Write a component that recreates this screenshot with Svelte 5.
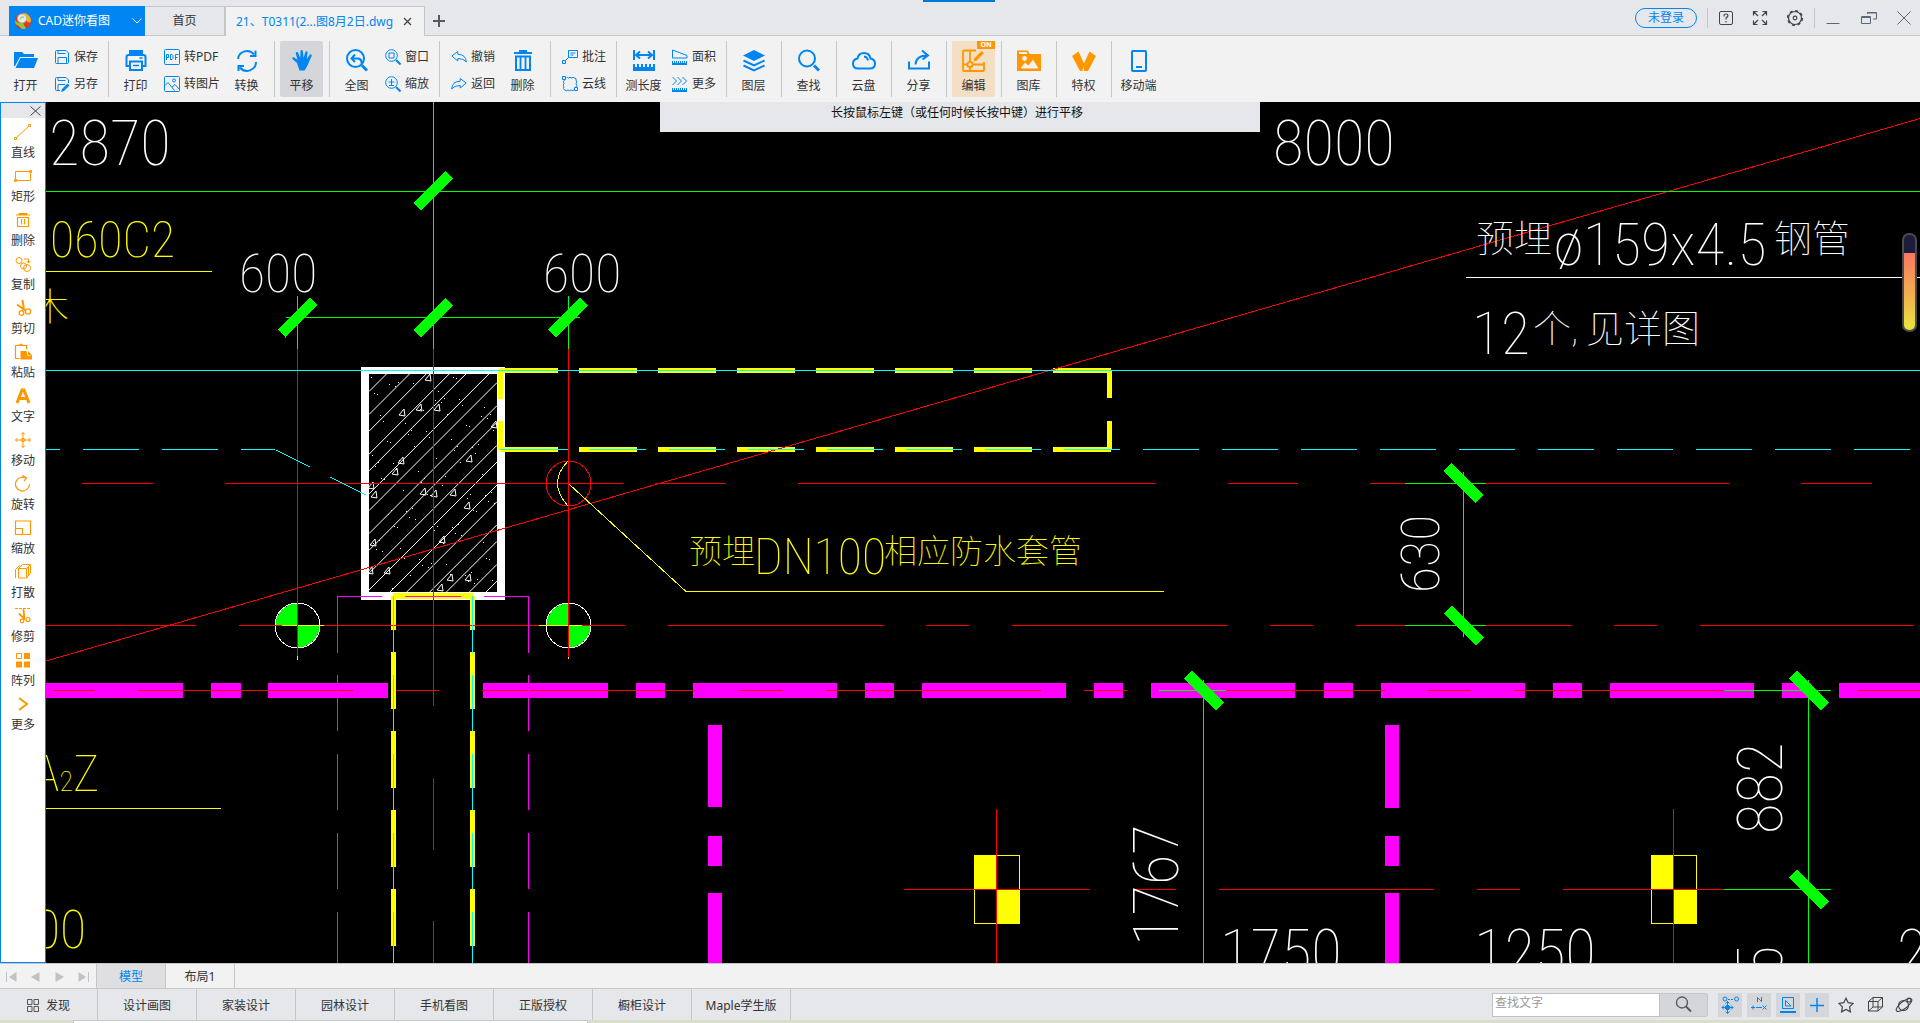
<script>
  const blue = '#0085f2';

  const icons = {
    open: '<path fill="currentColor" d="M0 3h8l2 2h10v3H6L1 17H0z"/><path fill="currentColor" d="M6.500 9H24l-4 10H1.500z"/>',
    print: '<path fill="currentColor" d="M5 1h14v4H5z"/><path fill="none" stroke="currentColor" stroke-width="2" d="M6 17H2.500V8q0-2 2-2h15q2 0 2 2v9H18M6 12.500h12V21H6z"/><path stroke="currentColor" stroke-width="1.500" d="M15.500 9h3M9 16.500h6"/>',
    convert: '<path fill="none" stroke="currentColor" stroke-width="2" d="M3 10A9 9 0 0 1 19 5.500M21 13A9 9 0 0 1 5 18.500M20.500 1.500v5.500H15M3.500 22v-5H9"/>',
    hand: '<path fill="currentColor" d="M7 14 3 10.500q-1.600-1.700.2-2.500l4.300 2.700L5.700 4q.6-1.700 2.200-.8L10.300 9 10.600 1.700q1-1.500 2.200 0L13.500 9l2-6.300q1.500-1 2.100.5L16.700 10l3.300-4.500q1.700-.6 1.700 1.200L17.700 16l-3 5.500H9.500z"/>',
    extents: '<g fill="none" stroke="currentColor" stroke-width="2"><circle cx="10.500" cy="9.500" r="8.500"/><path stroke-width="3" d="m17 16.500 5 5"/><path d="M10 5.500 6.500 9.500l3.500 3.500M7 9.500h6q4 .5 3.500 5"/></g>',
    trash: '<path fill="currentColor" d="M8 1h8v2h5v2H3V3h5z"/><path fill="none" stroke="currentColor" stroke-width="2" d="M5 7.500h14V21H5z"/><path stroke="currentColor" stroke-width="1.800" d="M9.500 8v12M14.500 8v12"/>',
    length: '<path fill="none" stroke="currentColor" stroke-width="2" d="M2 1v10M22 1v10M4 6h16M8 2.500 4 6l4 3.500M16 2.500 20 6l-4 3.500"/><path fill="currentColor" d="M1 15h2v3h2v-3h2v3h2v-3h2v3h2v-3h2v3h2v-3h2v3h2v-3h2v7H1z"/>',
    layers: '<path fill="currentColor" d="M12 1 23 6.500 12 12 1 6.500z"/><path fill="none" stroke="currentColor" stroke-width="2" d="m1.500 11.500 10.500 5 10.500-5M1.500 16.500l10.500 5 10.500-5"/>',
    find: '<circle cx="10" cy="9.500" r="8" fill="none" stroke="currentColor" stroke-width="2"/><path stroke="currentColor" stroke-width="3" d="m17 16.500 5 5"/>',
    cloud: '<path fill="none" stroke="currentColor" stroke-width="2" d="M6 19.500q-5 0-5-5 0-4 4.500-5Q6.500 4 12 4q5.500 0 6.500 5.500 4.500 1 4.500 5 0 5-5 5z"/><path fill="none" stroke="currentColor" stroke-width="1.800" d="M12 7.500q3.500.5 4 4"/>',
    share: '<path fill="none" stroke="currentColor" stroke-width="2" d="M2 12.500v7h20v-7M8.500 15.500q.5-9 12-9M15 1.500l6 5-5.500 4"/>',
    edit: '<g fill="none" stroke="currentColor" stroke-width="1.800"><path d="M14 1.500H2q-1 0-1 1V21q0 1 1 1h19q1 0 1-1v-8M1 15.500h4M10.500 15.500H22M8 1.500V13M8 18.500V22"/><circle cx="8" cy="15.500" r="2.600"/></g><path fill="currentColor" d="m19.500 2 2.300 2.300-7.300 7.500-3 .7.700-3z"/>',
    library: '<path fill="currentColor" d="M0 1.500h11l1.500 3.500H24v17H0z"/><path fill="#f2f2f2" d="M2 3h7.500l1 2H2zM3.500 19.500l4.500-6 3.500 3 4.500-6 5.500 9z"/><circle cx="7.500" cy="9.500" r="2.400" fill="#f2f2f2"/>',
    right: '<path fill="currentColor" d="m0 7 6.500-4.500L12 14.500 17.500 2.500 24 7l-8 15h-4l-.6-4.500-1 4.500H8z"/>',
    mobile: '<rect x="5" y="2" width="14" height="20" rx="1" fill="none" stroke="currentColor" stroke-width="2"/><path stroke="currentColor" stroke-width="2" d="M9 18h6"/>',
    save: '<path fill="none" stroke="currentColor" d="M1.500 2.500q0-1 1-1H12l2.500 2.500v9.500q0 1-1 1h-11q-1 0-1-1zM4 1.500v3h7.500M4 14.500v-6h8.500v6"/>',
    saveAs: '<path fill="none" stroke="currentColor" d="M6 14.500H2.500q-1 0-1-1v-11q0-1 1-1H12l2.500 2.500v3M4 1.500v3h7.500M4 14.500v-6h7"/><path fill="currentColor" d="m13.500 7.500 2 2-5.500 5.500-3 1 1-3z"/>',
    pdf: '<rect x=".5" y=".5" width="15" height="15" rx="1" fill="none" stroke="currentColor"/><path fill="none" stroke="currentColor" d="M2.500 11V5.500h2v3h-2M6.500 11V5.500h1.500l1 1v3l-1 1H6.500M11.500 11V5.500h3M11.500 8.500h2"/>',
    picture: '<rect x=".5" y=".5" width="15" height="15" rx="1" fill="none" stroke="currentColor"/><circle cx="10" cy="4.500" r="1.500" fill="none" stroke="currentColor"/><path fill="none" stroke="currentColor" d="m1 9.500 3-3 6.500 8M8 11l3-2.500 4 4.500"/>',
    window: '<circle cx="6.500" cy="6.500" r="5.800" fill="none" stroke="currentColor"/><path fill="none" stroke="currentColor" d="M4 4h5v5H4z"/><path stroke="currentColor" stroke-width="2" d="m11 11 4.500 4.500"/>',
    zoom: '<circle cx="6.500" cy="6.500" r="5.800" fill="none" stroke="currentColor"/><path fill="none" stroke="currentColor" d="M3.500 6h6M6.500 3v6M4 9.500h5"/><path stroke="currentColor" stroke-width="2" d="m11 11 4.500 4.500"/>',
    undo: '<path fill="none" stroke="currentColor" d="m.8 7 6-4.500v2.800q8 0 8.500 7.700-2.500-3.500-8.500-3.500V12z"/>',
    redo: '<path fill="none" stroke="currentColor" d="m15.200 7-6-4.500v2.800q-8 0-8.500 7.700 2.500-3.500 8.500-3.500V12z"/>',
    note: '<path fill="none" stroke="currentColor" d="M6.500 1.500h9v7h-9zM8.500 4h5M8.500 6h3M6.500 8.500l-3 3M.5 11.500h3v3h-3z"/>',
    cloudLine: '<path fill="none" stroke="currentColor" d="M2.500 4Q.5 5.500 2 7.500.5 9.500 2 11q-1.500 1.500.5 3 2 1.500 3.500 0 1.500 1.500 3 0 1.500 1 3 0M14 11q1.500-1.500 0-3.500 1.500-1.500 0-3.500.5-2-1.500-2-1.500-1.500-3 0-1.500-1.500-3 0-1-1-2 0M.5.500h3v3h-3zM12.500 11.500h3v3h-3z"/>',
    area: '<path fill="none" stroke="currentColor" d="M.5 1v8h14.500V6.500z"/><path fill="currentColor" d="M0 12h1v2h1v-2h1v2h1v-2h1v2h1v-2h1v2h1v-2h1v2h1v-2h1v2h1v-2h1v2h1v-2h1v4H0z"/>',
    moreMeasure: '<path fill="none" stroke="currentColor" d="m.5 1 4 4-4 4M5.500 1l4 4-4 4M10.500 1l4 4-4 4"/><path fill="currentColor" d="M0 12h1v2h1v-2h1v2h1v-2h1v2h1v-2h1v2h1v-2h1v2h1v-2h1v2h1v-2h1v2h1v-2h1v4H0z"/>',
    line: '<path fill="none" stroke="currentColor" d="M2 15 15 3M.5 14.500h2v2h-2zM14.500 1.500h2v2h-2z"/>',
    rect: '<path fill="none" stroke="currentColor" d="M1.500 4.500h15v9h-15zM.5 12.500h2v2h-2zM15.500 3.500h2v2h-2z"/>',
    bin: '<path fill="none" stroke="currentColor" stroke-width="1.200" d="M3.500 6.500h11v9h-11zM7.500 8v5.500M10.500 8v5.500M2 4h14"/><path fill="currentColor" d="M4.500 2h9v2h-9z"/>',
    copy: '<g fill="none" stroke="currentColor"><circle cx="5" cy="5.500" r="3"/><circle cx="9.500" cy="11" r="3"/><circle cx="13" cy="13" r="3.500"/><path d="M10 4h4.500v4M12.500 6l2 2 2-2"/></g>',
    cut: '<path stroke="currentColor" stroke-width="2" fill="none" d="m3 5.500 8 6M8.500 1l1.500 10"/><g fill="none" stroke="currentColor" stroke-width="1.300"><circle cx="7.500" cy="14" r="2.300"/><circle cx="14" cy="12.500" r="2.600"/></g>',
    paste: '<path fill="none" stroke="currentColor" stroke-width="1.200" d="M5.500 15.500h-4v-13h11v4"/><path fill="currentColor" d="M4.500 3V1.500H6Q7-.5 8 1.500h1.500V3zM6.500 8h6l1 5 5-1v4.500H6.500zM14 8l4 4h-4z"/>',
    text: '<path fill="none" stroke="currentColor" stroke-width="3" d="m3 16 5-13h2l5 13M5 11.500h8"/>',
    move: '<g fill="none" stroke="currentColor"><path d="M9 1.500v15M1.500 9h15M7 3.500l2-2 2 2M7 14.500l2 2 2-2M3.500 7l-2 2 2 2M14.500 7l2 2-2 2"/><circle cx="9" cy="9" r="1.800"/></g>',
    rotate: '<path fill="none" stroke="currentColor" stroke-width="1.200" d="M12 3A7 7 0 1 0 15.500 9M8.500.5 12.500 3 10 6"/>',
    scale: '<path fill="none" stroke="currentColor" stroke-width="1.200" d="M1.500 9V2h15v13.500H9M1.500 9.500h7v6h-7z"/>',
    explode: '<path fill="none" stroke="currentColor" d="M4.500 5.500h8v9.500h-8zM4.500 5.500l4-4h8l-4 4M16.500 1.500v8.500l-4 5M1.500 15V6.500L6 2M14.500 4v8.500"/>',
    trim: '<path stroke="currentColor" stroke-dasharray="3 1" d="M1 1.500h16"/><path stroke="currentColor" stroke-width="1.800" fill="none" d="m5 6.500 6 6M9.500 2l.8 9"/><g fill="none" stroke="currentColor" stroke-width="1.200"><circle cx="8" cy="14" r="1.800"/><circle cx="14" cy="12.500" r="2"/></g>',
    array: '<path fill="none" stroke="currentColor" d="M2.500 2.500h5v5h-5z"/><path fill="currentColor" d="M10 2h6v6h-6zM2 10.500h6v6H2zM10 10.500h6v6h-6z"/>',
    chevron: '<path fill="none" stroke="currentColor" stroke-width="2" d="m5 3 8 6-8 6"/>',
  };

  const groups = [
    [{ big: 'open', label: '打开' }, { stack: [['save', '保存'], ['saveAs', '另存']] }],
    [{ big: 'print', label: '打印' }, { stack: [['pdf', '转PDF'], ['picture', '转图片']], wide: true }, { big: 'convert', label: '转换' }],
    [{ big: 'hand', label: '平移', active: true }],
    [{ big: 'extents', label: '全图' }, { stack: [['window', '窗口'], ['zoom', '缩放']] }],
    [{ stack: [['undo', '撤销'], ['redo', '返回']], lead: true, tight: true }, { big: 'trash', label: '删除' }],
    [{ stack: [['note', '批注'], ['cloudLine', '云线']], lead: true }],
    [{ big: 'length', label: '测长度' }, { stack: [['area', '面积'], ['moreMeasure', '更多']] }],
    [{ big: 'layers', label: '图层' }],
    [{ big: 'find', label: '查找' }],
    [{ big: 'cloud', label: '云盘' }],
    [{ big: 'share', label: '分享' }],
    [{ big: 'edit', label: '编辑', warm: true, on: true }],
    [{ big: 'library', label: '图库', warm: true }],
    [{ big: 'right', label: '特权', warm: true }],
    [{ big: 'mobile', label: '移动端' }],
  ];

  const tools = [
    ['line', '直线'], ['rect', '矩形'], ['bin', '删除'], ['copy', '复制'], ['cut', '剪切'],
    ['paste', '粘贴'], ['text', '文字'], ['move', '移动'], ['rotate', '旋转'], ['scale', '缩放'],
    ['explode', '打散'], ['trim', '修剪'], ['array', '阵列'], ['chevron', '更多'],
  ];

  const links = ['设计画图', '家装设计', '园林设计', '手机看图', '正版授权', '橱柜设计', 'Maple学生版'];

  let query = $state('');

  // Drawing data, in drawing coordinates
  const hseg = (y, list) => list.map(([a, b]) => `M${a} ${y}H${b}`).join('');
  const vseg = (x, list) => list.map(([a, b]) => `M${x} ${a}V${b}`).join('');
  const dashes = (from, to, on, step) => {
    const out = [];
    for (let p = from; p < to; p += step) out.push([p, Math.min(p + on, to)]);
    return out;
  };

  const redAxes =
    hseg(483.5, [[82, 153], [225, 623], [655, 726], [798, 1156], [1228, 1298], [1370, 1405], [1486, 1729], [1801, 1872]]) +
    hseg(625.5, [[46, 196], [239, 625], [668, 883], [926, 969], [1012, 1227], [1270, 1313], [1356, 1405], [1486, 1571], [1614, 1657], [1700, 1914]]) +
    hseg(690.5, [[53, 95], [138, 353], [396, 439], [482, 696], [739, 783], [826, 1041], [1084, 1127], [1226, 1385], [1428, 1471], [1514, 1724], [1857, 1920]]) +
    hseg(889.5, [[904, 1090], [1133, 1176], [1219, 1434], [1477, 1520], [1563, 1724]]) +
    vseg(433.5, [[349, 706], [778, 850], [921, 963]]) +
    vseg(297.5, [[349, 656]]) + vseg(568.5, [[349, 657]]) +
    vseg(996.5, [[809, 963]]) + vseg(1673.5, [[809, 963]]);

  const greenDims =
    hseg(191.5, [[46, 1920]]) + hseg(317.5, [[286, 580]]) +
    vseg(433.5, [[102, 349]]) + vseg(297.5, [[296, 349]]) + vseg(568.5, [[296, 349]]) +
    hseg(483.5, [[1405, 1486]]) + hseg(625.5, [[1405, 1486]]) + vseg(1463.5, [[472, 637]]) +
    hseg(690.5, [[1159, 1226], [1724, 1831]]) + hseg(889.5, [[1724, 1831]]) +
    vseg(1203.5, [[680, 963]]) + vseg(1808.5, [[680, 963]]);

  const rising = [[297.5, 317.5], [433, 318], [568, 317.5], [433, 191]];
  const falling = [[1463.5, 483], [1463.5, 625.5], [1203.5, 690.5], [1808.5, 690.5], [1808.5, 889.5]];

  const beamH = hseg(690.5, [[46, 183], [211, 241], [268, 388], [483, 608], ...dashes(636, 1920, 29, 229.2), ...dashes(693, 1920, 144, 229.2)]);
  const beamV = vseg(715, [[725, 807], [836, 866], [893, 963]]) + vseg(1391.5, [[725, 808], [836, 866], [893, 963]]);

  const columnDashes = [[596, 653], [675, 731], [754, 810], [833, 889], [912, 963]];
  const footing = vseg(337.5, columnDashes) + vseg(528.5, columnDashes) + hseg(596.5, [[337, 382], [405, 461], [484, 529]]);
  const columnCore = vseg(393.5, columnDashes) + vseg(472.5, columnDashes);
  const yellowRuns = [[596, 630], [652, 709], [731, 788], [810, 867], [889, 946]];
  const yellowColumn = vseg(393.5, yellowRuns) + vseg(472.5, yellowRuns);
  const yellowBeam =
    hseg(370.5, dashes(500, 1111, 58, 79)) + hseg(449.5, dashes(500, 1111, 58, 79)) +
    vseg(500.5, [[370, 399], [421, 450]]) + vseg(1109.5, [[370, 398], [421, 450]]);
  const cyan =
    hseg(370.5, [[46, 1920]]) +
    hseg(449.5, [[46, 60], [83, 139], [162, 218], [241, 275], [500, 568], ...dashes(590, 1920, 56, 79)]) +
    'M276 450L310 467M330 477L366 495';

  const hatch = [];
  for (let i = 0; i < 9; i++) {
    hatch.push(760.5 + i * 39.7, 783.5 + i * 39.7);
  }
  const stones = [[428, 377], [402, 412], [419, 407], [437, 407], [494, 424], [469, 458], [401, 460], [395, 471], [371, 485], [374, 494], [423, 491], [434, 493], [453, 492], [467, 505], [373, 542], [442, 539], [370, 570], [387, 570], [450, 577], [468, 577], [440, 587]];
  const grains = [];
  for (let i = 0; i < 110; i++) {
    grains.push([371 + ((i * 47) % 125), 377 + ((i * 89 + ((i * i) % 7) * 5) % 213)]);
  }
  const bench = [[297.5, 625.5], [568.5, 625.5]];
  const blocks = [974, 1651];
</script>

<svelte:head><title>CAD迷你看图</title></svelte:head>

{#snippet icon(name, size, box)}
  <svg width={size} height={size} viewBox="0 0 {box} {box}" aria-hidden="true">{@html icons[name]}</svg>
{/snippet}

<div class="app">
  <header class="titlebar">
    <i class="notch"></i>
    <button class="brand">
      <svg width="18" height="18" viewBox="0 0 18 18" aria-hidden="true">
        <circle cx="9" cy="9" r="8" fill="#e2342b" />
        <path d="M9 1a8 8 0 0 1 8 8q-1 3-3 1L9 6z" fill="#f6b21b" />
        <path d="M1.200 8Q4 12 9 11l3 5.500Q4 19 1.200 11z" fill="#8cc63f" />
        <path d="M1.500 12Q5 14 8 17 3 17 1.500 12z" fill="#d92a22" />
        <path d="M11 10l5 4.500" stroke="#d8441e" stroke-width="2.500" />
        <circle cx="8" cy="6.500" r="4.500" fill="#e8f0e0" stroke="#b9b39a" />
        <path d="M6 7.500Q8 3 10 6" stroke="#a9c98a" fill="none" stroke-width="1.500" />
      </svg>
      <span>CAD迷你看图</span>
      <svg class="drop" width="10" height="6" viewBox="0 0 10 6" aria-hidden="true"><path d="m.5.500 4.500 4.500L9.500.500" fill="none" stroke="#fff" /></svg>
    </button>
    <nav class="tabs">
      <button class="tab">首页</button>
      <div class="tab current">
        <button class="doc">21、T0311(2...图8月2日.dwg</button>
        <button class="x" aria-label="关闭标签">
          <svg width="9" height="9" viewBox="0 0 9 9"><path d="M1 1l7 7M8 1L1 8" stroke="#444" stroke-width="1.300" /></svg>
        </button>
      </div>
      <button class="plus" aria-label="新建标签">
        <svg width="12" height="12" viewBox="0 0 12 12"><path d="M6 0v12M0 6h12" stroke="#555b66" stroke-width="2" /></svg>
      </button>
    </nav>
    <div class="controls">
      <button class="login">未登录</button>
      <span class="bar"></span>
      <button aria-label="帮助"><svg width="16" height="16" viewBox="0 0 16 16"><rect x="1.500" y="1.500" width="13" height="13" rx="1.500" fill="none" stroke="#444" /><path d="M6 6.500V5.500q0-1.500 2-1.500t2 1.500q0 1-2 2.500v1.500M8 11v1.500" fill="none" stroke="#444" stroke-width="1.200" /></svg></button>
      <button aria-label="全屏"><svg width="16" height="16" viewBox="0 0 16 16"><path d="M1.500 5.500v-4h4M2 2l4 4M10.500 1.500h4v4M14 2l-4 4M1.500 10.500v4h4M2 14l4-4M10.500 14.500h4v-4M14 14l-4-4" fill="none" stroke="#444" stroke-width="1.200" /></svg></button>
      <button aria-label="设置"><svg width="18" height="18" viewBox="0 0 18 18"><circle cx="9" cy="9" r="6.500" fill="none" stroke="#444" stroke-width="1.200" /><circle cx="9" cy="9" r="7.300" fill="none" stroke="#444" stroke-width="1.600" stroke-dasharray="3 2.730" /><circle cx="9" cy="9" r="1.800" fill="none" stroke="#444" stroke-width="1.200" /></svg></button>
      <span class="bar"></span>
      <button class="win" aria-label="最小化"><svg width="16" height="16" viewBox="0 0 16 16"><path d="M1.500 13.500h13" stroke="#5c6675" /></svg></button>
      <button class="win" aria-label="还原"><svg width="16" height="16" viewBox="0 0 16 16"><path d="M.5 6.500h9v7h-9zM.5 7.500h9M6.500 4V2.500h9v6.500h-3.500M6.500 3h9" fill="none" stroke="#5c6675" /></svg></button>
      <button class="win" aria-label="关闭"><svg width="14" height="14" viewBox="0 0 14 14"><path d="M.5.500l13 13M13.500.500l-13 13" stroke="#5c6675" /></svg></button>
    </div>
  </header>

  <div class="toolbar">
    {#each groups as group}
      <div class="group">
        {#each group as part}
          {#if part.big}
            <button class="big" class:active={part.active} class:warm={part.warm} class:on={part.on}>
              {@render icon(part.big, 24, 24)}
              <span>{part.label}</span>
              {#if part.on}<b class="flag">ON</b>{/if}
            </button>
          {:else}
            <div class="stack" class:lead={part.lead} class:tight={part.tight} class:wide={part.wide}>
              {#each part.stack as [name, label]}
                <button class="small">{@render icon(name, 16, 16)}<span>{label}</span></button>
              {/each}
            </div>
          {/if}
        {/each}
      </div>
    {/each}
  </div>

  <main>
    <aside>
      <div class="panelhead">
        <button aria-label="关闭面板"><svg width="11" height="10" viewBox="0 0 11 10"><path d="M.5.500l10 9M10.500.500l-10 9" stroke="#444" /></svg></button>
      </div>
      {#each tools as [name, label]}
        <button class="tool">{@render icon(name, 18, 18)}<span>{label}</span></button>
      {/each}
    </aside>

    <div class="canvas">
      <svg class="drawing" viewBox="46 102 1874 861" preserveAspectRatio="xMinYMin slice" shape-rendering="crispEdges">
        <path d="M361 367H505V600H361zM369 374V592H497V374z" fill="#fff" fill-rule="evenodd" />
        <clipPath id="core"><rect x="369" y="374" width="128" height="218" /></clipPath>
        <g clip-path="url(#core)" stroke="#fff" fill="none" shape-rendering="geometricPrecision">
          {#each hatch as c}<path d="M369 {c - 369}L497 {c - 497}" />{/each}
          {#each stones as [x, y]}<path d="M{x - 3} {y + 3}L{x + 2} {y - 3}L{x + 3} {y + 4}Z" />{/each}
        </g>
        {#each grains as [x, y]}<rect {x} {y} width="1" height="1" fill="#fff" />{/each}

        <path d={beamH} stroke="#f0f" stroke-width="15" />
        <path d={beamV} stroke="#f0f" stroke-width="14" />
        {#each blocks as x}
          <rect x={x + 0.5} y="855.5" width="45" height="68" fill="none" stroke="#ff0" />
          <path d="M{x} 855h23v34h-23zM{x + 23} 889h23v35h-23z" fill="#ff0" />
        {/each}
        {#each bench as [x, y]}
          <path d="M{x} {y}H{x - 22}A22 22 0 0 1 {x} {y - 22}zM{x} {y}H{x + 22}A22 22 0 0 1 {x} {y + 22}z" fill="#0f0" />
          <circle cx={x} cy={y} r="22.5" fill="none" stroke="#fff" />
        {/each}
        <path d={yellowBeam} stroke="#ff0" stroke-width="5" />
        <path d="M393 596H473" stroke="#ff0" stroke-width="6" />
        <path d={yellowColumn} stroke="#ff0" stroke-width="5" />
        <path d={redAxes} stroke="#f00" />
        <path d="M46 661L1920 118.500" stroke="#f00" fill="none" />
        <path d={footing} stroke="#f0f" />
        <path d={cyan} stroke="#0ff" />
        <path d={columnCore} stroke="#0ff" />
        <path d={greenDims} stroke="#0f0" />
        {#each rising as [x, y]}<path d="M{x + 12} {y - 20}l8 7.500-32 32.500-8-8z" fill="#0f0" />{/each}
        {#each falling as [x, y]}<path d="M{x - 12} {y - 20}l32 32-8 8-32-32z" fill="#0f0" />{/each}
        <circle cx="568.500" cy="483.500" r="22.500" fill="none" stroke="#f00" />
        <path d="M568 461q-21 22 0 45M569 484L686 591.500H1164M46 271.500H212M46 808.500H221M282 625.500h15M298 625.500h26M539 625.500h29M569 625.500h13M297.500 656v4M568.500 657v2" fill="none" stroke="#ff0" />
        <path d="M1466 277.500H1920" stroke="#fff" />

        <g class="cad" fill="#fff">
          <text class="dim" x="49" y="165">2870</text>
          <text class="dim" x="1273" y="165">8000</text>
          <text x="239" y="292">600</text>
          <text x="543" y="292">600</text>
          <text class="han" x="1476" y="252">预埋</text>
          <text class="pipe" x="1554" y="265">ø159x4.5</text>
          <text class="han" x="1774" y="252">钢管</text>
          <text class="pipe" x="1472" y="354">12</text>
          <text class="han" x="1533" y="342">个,</text>
          <text class="han" x="1586" y="342">见详图</text>
          <text transform="translate(1439 593) rotate(-90)">630</text>
          <text class="dim" transform="translate(1782 834) rotate(-90)">882</text>
          <text class="dim" transform="translate(1178 946) rotate(-90)">1767</text>
          <text class="dim" transform="translate(1782 976) rotate(-90)">5</text>
          <text class="dim" x="1220" y="974">1750</text>
          <text class="dim" x="1474" y="974">1250</text>
          <text class="dim" x="1897" y="974">2</text>
        </g>
        <g class="cad" fill="#ff0">
          <text class="mark" x="50" y="257">060C2</text>
          <text class="han" x="31" y="320">木</text>
          <text class="sleeve" x="689" y="563">预埋</text>
          <text class="mark" x="754" y="574">DN100</text>
          <text class="sleeve" x="884" y="563">相应防水套管</text>
          <text class="mark" x="33" y="791">A<tspan class="sub">2</tspan>Z</text>
          <text x="34" y="948">00</text>
        </g>
      </svg>
      <div class="hint">长按鼠标左键（或任何时候长按中键）进行平移</div>
      <div class="gauge"></div>
    </div>
  </main>

  <div class="sheets">
    <div class="pager">
      <button aria-label="第一个"><svg width="11" height="10" viewBox="0 0 11 10"><path d="M.5 0v10" stroke="#c0c2c6" /><path d="M10.500 0v10L3 5z" fill="#c0c2c6" /></svg></button>
      <button aria-label="上一个"><svg width="11" height="10" viewBox="0 0 11 10"><path d="M9.500 0v10L1 5z" fill="#c0c2c6" /></svg></button>
      <button aria-label="下一个"><svg width="11" height="10" viewBox="0 0 11 10"><path d="M1.500 0v10L10 5z" fill="#c0c2c6" /></svg></button>
      <button aria-label="最后一个"><svg width="11" height="10" viewBox="0 0 11 10"><path d="M10.500 0v10" stroke="#c0c2c6" /><path d="M.5 0v10L8 5z" fill="#c0c2c6" /></svg></button>
    </div>
    <button class="sheet chosen">模型</button>
    <button class="sheet">布局1</button>
  </div>

  <footer>
    <a class="link" href="#find">
      <svg width="12" height="13" viewBox="0 0 12 13" aria-hidden="true"><path d="M.5.500h4.500v5H.500zM7 .500h4.500v5H7zM.5 7.500h4.500v5H.500zM7 7.500h4.500v5H7z" fill="none" stroke="#555" /></svg>
      发现
    </a>
    {#each links as link}<a class="link" href="#link">{link}</a>{/each}
    <form class="search" onsubmit={(e) => e.preventDefault()}>
      <input aria-label="查找文字" placeholder="查找文字" bind:value={query} />
      <button aria-label="搜索"><svg width="17" height="17" viewBox="0 0 17 17"><circle cx="7" cy="6.500" r="5.500" fill="none" stroke="#555" stroke-width="1.300" /><path d="M11 10.500l5 5" stroke="#555" stroke-width="1.800" /></svg></button>
    </form>
    <div class="modes">
      <button class="mode lit" aria-label="对象捕捉"><svg width="18" height="18" viewBox="0 0 18 18"><g fill="none" stroke={blue}><circle cx="4" cy="3" r="2" /><circle cx="15.500" cy="3" r="2" /><path d="M7 3.500h6" stroke-dasharray="2 1" /><path d="M6.500 5v12M1 11.500h11M4.500 7.500l2-2 2 2M4.500 15.500l2 2 2-2M3 9.500l-2 2 2 2M10 9.500l2 2-2 2" /><path d="M6.500 8.500l3 3-3 3-3-3z" fill={blue} /></g></svg></button>
      <button class="mode lit" aria-label="极轴追踪"><svg width="18" height="18" viewBox="0 0 18 18"><path d="M7.500 6V1.500l4 4V1M1 11.500h4M3 9.500v4M6 11.500h6M12.500 9.500l4 4M12.500 13.500l4-4" fill="none" stroke={blue} /></svg></button>
      <button class="mode lit" aria-label="正交"><svg width="18" height="18" viewBox="0 0 18 18"><path d="M3.500 1.500h11v11h-11zM6.500 4.500v5.500h5.500z" fill="none" stroke={blue} /><path d="M1 16h16" stroke={blue} stroke-width="2" /></svg></button>
      <button class="mode lit" aria-label="十字光标"><svg width="18" height="18" viewBox="0 0 18 18"><path d="M9 2v14M2 9.500h14" stroke={blue} stroke-width="1.500" /></svg></button>
      <button class="mode" aria-label="收藏"><svg width="16" height="16" viewBox="0 0 16 16"><path d="M8 1.200l2.200 4.500 4.900.7-3.500 3.500.8 5L8 12.500l-4.400 2.400.8-5L.9 6.400l4.900-.7z" fill="none" stroke="#444" stroke-width="1.200" /></svg></button>
      <button class="mode" aria-label="三维"><svg width="17" height="17" viewBox="0 0 17 17"><path d="M1.500 5.500h9.500v9.500H1.500zM1.500 5.500L6 1.500h9.500L11 5.500M15.500 1.500V11L11 15M6 1.500V11h9.500M6 11l-4.500 4" fill="none" stroke="#444" /></svg></button>
      <button class="mode" aria-label="漫游"><svg width="18" height="18" viewBox="0 0 18 18"><g fill="none" stroke="#444" stroke-width="1.100"><circle cx="8.500" cy="9.500" r="5" /><ellipse cx="9" cy="9" rx="9.500" ry="3.500" transform="rotate(-38 9 9)" /><circle cx="14" cy="4" r="2" /></g></svg></button>
    </div>
  </footer>
  <div class="under"><i></i></div>
</div>

<style>
  :global(body) { margin: 0; }
  .app {
    display: flex; flex-direction: column; height: 100vh; overflow: hidden;
    font: 12px/16px "Noto Sans", "Noto Sans CJK SC", sans-serif; color: #333; background: #f2f2f2;
  }
  button { font: inherit; color: inherit; background: none; border: 0; padding: 0; margin: 0; cursor: pointer; }
  svg { display: block; flex: none; }

  .titlebar { position: relative; display: flex; align-items: flex-end; height: 35px; flex: none; padding-left: 9px; background: #e5e7eb; border-bottom: 1px solid #c4c6c9; }
  .notch { position: absolute; left: 50%; top: 0; width: 72px; height: 2px; margin-left: -37px; background: #0078d7; }
  .brand { display: flex; align-items: center; width: 136px; height: 30px; margin-bottom: -1px; padding: 0 3px 0 5px; gap: 6px; background: #0085f2; color: #fff; box-sizing: border-box; }
  .drop { margin-left: auto; }
  .tabs { display: flex; align-items: flex-end; }
  .tab { display: flex; align-items: center; justify-content: center; width: 80px; height: 29px; box-sizing: border-box; border: 1px solid #c4c6c9; border-bottom: 0; border-left: 0; }
  .tab.current { width: 200px; height: 30px; margin-bottom: -1px; background: #f2f2f2; color: #0085f2; border-left: 1px solid #c4c6c9; padding: 0 12px 0 10px; justify-content: space-between; }
  .doc { white-space: nowrap; }
  .plus { padding: 0 8px 8px; }
  .controls { display: flex; align-items: center; gap: 18px; margin-left: auto; height: 35px; padding-right: 9px; }
  .login { width: 62px; height: 20px; line-height: 16px; border: 1px solid #0085f2; border-radius: 10px; color: #0085f2; }
  .bar { width: 1px; height: 20px; background: #c4c6c9; margin: 0 -8px; }
  .win + .win { margin-left: 2px; }

  .toolbar { display: flex; height: 66px; flex: none; padding-top: 5px; box-sizing: border-box; align-items: flex-start; }
  .group { display: flex; height: 56px; padding: 0 6px 0 5px; border-right: 1px solid #c4c6c9; }
  .group:first-child { padding-left: 4px; }
  .group:last-child { border: 0; }
  .big { position: relative; display: flex; flex-direction: column; align-items: center; justify-content: space-between; width: 43px; height: 56px; padding: 8px 0 3px; box-sizing: border-box; border-radius: 2px; white-space: nowrap; }
  .big svg { color: #0085f2; }
  .big.warm svg { color: #ff9800; }
  .big.active { background: #d4d6da; }
  .big.on { background: #f2dfc4; }
  .flag { position: absolute; top: 0; right: 0; width: 18px; height: 8px; background: #ff9800; color: #fff; font-size: 7px; line-height: 8px; text-align: center; }
  .stack { display: flex; flex-direction: column; gap: 11px; padding: 8px 4px 0 7px; }
  .stack.lead { padding-left: 6px; }
  .stack.tight { padding-right: 6px; }
  .stack.wide { padding-right: 5px; }
  .small { display: flex; align-items: center; gap: 4px; height: 16px; white-space: nowrap; }
  .small svg { color: #0085f2; }

  main { display: flex; flex: 1; min-height: 0; background: #000; }
  aside { width: 46px; flex: none; box-sizing: border-box; border: 1px solid #0085f2; background: #fff; display: flex; flex-direction: column; }
  .panelhead { display: flex; justify-content: flex-end; align-items: center; height: 15px; flex: none; padding: 0 4px; background: #e5e7eb; margin-bottom: 2px; }
  .tool { display: flex; flex-direction: column; align-items: center; height: 44px; flex: none; padding-top: 3px; box-sizing: border-box; gap: 4px; }
  .tool svg { color: #ff9800; }

  .canvas { position: relative; flex: 1; min-width: 0; overflow: hidden; }
  .drawing { width: 100%; height: 100%; }
  .cad { font: 100 54px "Roboto Condensed", "Roboto", "Noto Sans CJK SC", sans-serif; }
  .dim { font-size: 63px; }
  .pipe { font-size: 60px; }
  .mark { font-size: 50px; }
  .han { font-size: 38px; }
  .sleeve { font-size: 33px; }
  .sub { font-size: 28px; }
  .hint { position: absolute; top: 0; left: calc(50% - 323px); width: 600px; height: 30px; box-sizing: border-box; padding: 3px 6px 0 0; background: #e5e7eb; color: #111; text-align: center; }
  .gauge { position: absolute; right: 3px; top: 131px; width: 15px; height: 99px; box-sizing: border-box; border: 2px solid #4a4a50; border-radius: 7px; background: linear-gradient(#1d1d3b 18px, #f9785f 18px, #f0b050 60px, #eae23c 92px); }

  .sheets { display: flex; height: 24px; flex: none; border-top: 1px solid #c4c6c9; border-bottom: 1px solid #c4c6c9; }
  .pager { display: flex; align-items: center; justify-content: space-between; width: 97px; padding: 2px 7px 0 6px; box-sizing: border-box; border-right: 1px solid #c4c6c9; }
  .sheet { width: 69px; padding-top: 2px; border-right: 1px solid #c4c6c9; }
  .sheet.chosen { background: #dfdfe2; color: #0085f2; }

  footer { display: flex; align-items: center; height: 31px; flex: none; background: #e5e7eb; padding-right: 4px; }
  .link { display: flex; align-items: center; justify-content: center; gap: 7px; width: 98px; height: 31px; padding-top: 2px; box-sizing: border-box; border-right: 1px solid #c4c6c9; color: #333; text-decoration: none; white-space: nowrap; }
  .link + .link { width: 99px; }
  .search { display: flex; margin-left: auto; height: 24px; }
  .search input { width: 168px; height: 24px; box-sizing: border-box; border: 1px solid #bfc1c5; padding: 0 0 4px 2px; font: inherit; background: #fff; outline: 0; }
  .search input::placeholder { color: #999; opacity: 1; }
  .search button { display: flex; align-items: center; justify-content: center; width: 48px; background: #d4d6da; border: 1px solid #c4c6c9; border-left: 0; border-radius: 0 3px 3px 0; }
  .modes { display: flex; gap: 5px; margin-left: 10px; }
  .mode { display: flex; align-items: center; justify-content: center; width: 24px; height: 24px; }
  .mode.lit { background: #d4d6da; }
  .under { height: 3px; flex: none; background: #dadecf; padding-left: 73px; }
  .under i { display: block; width: 513px; height: 2px; background: #fff; border: 1px solid #c4c6c9; border-bottom: 0; }
</style>
